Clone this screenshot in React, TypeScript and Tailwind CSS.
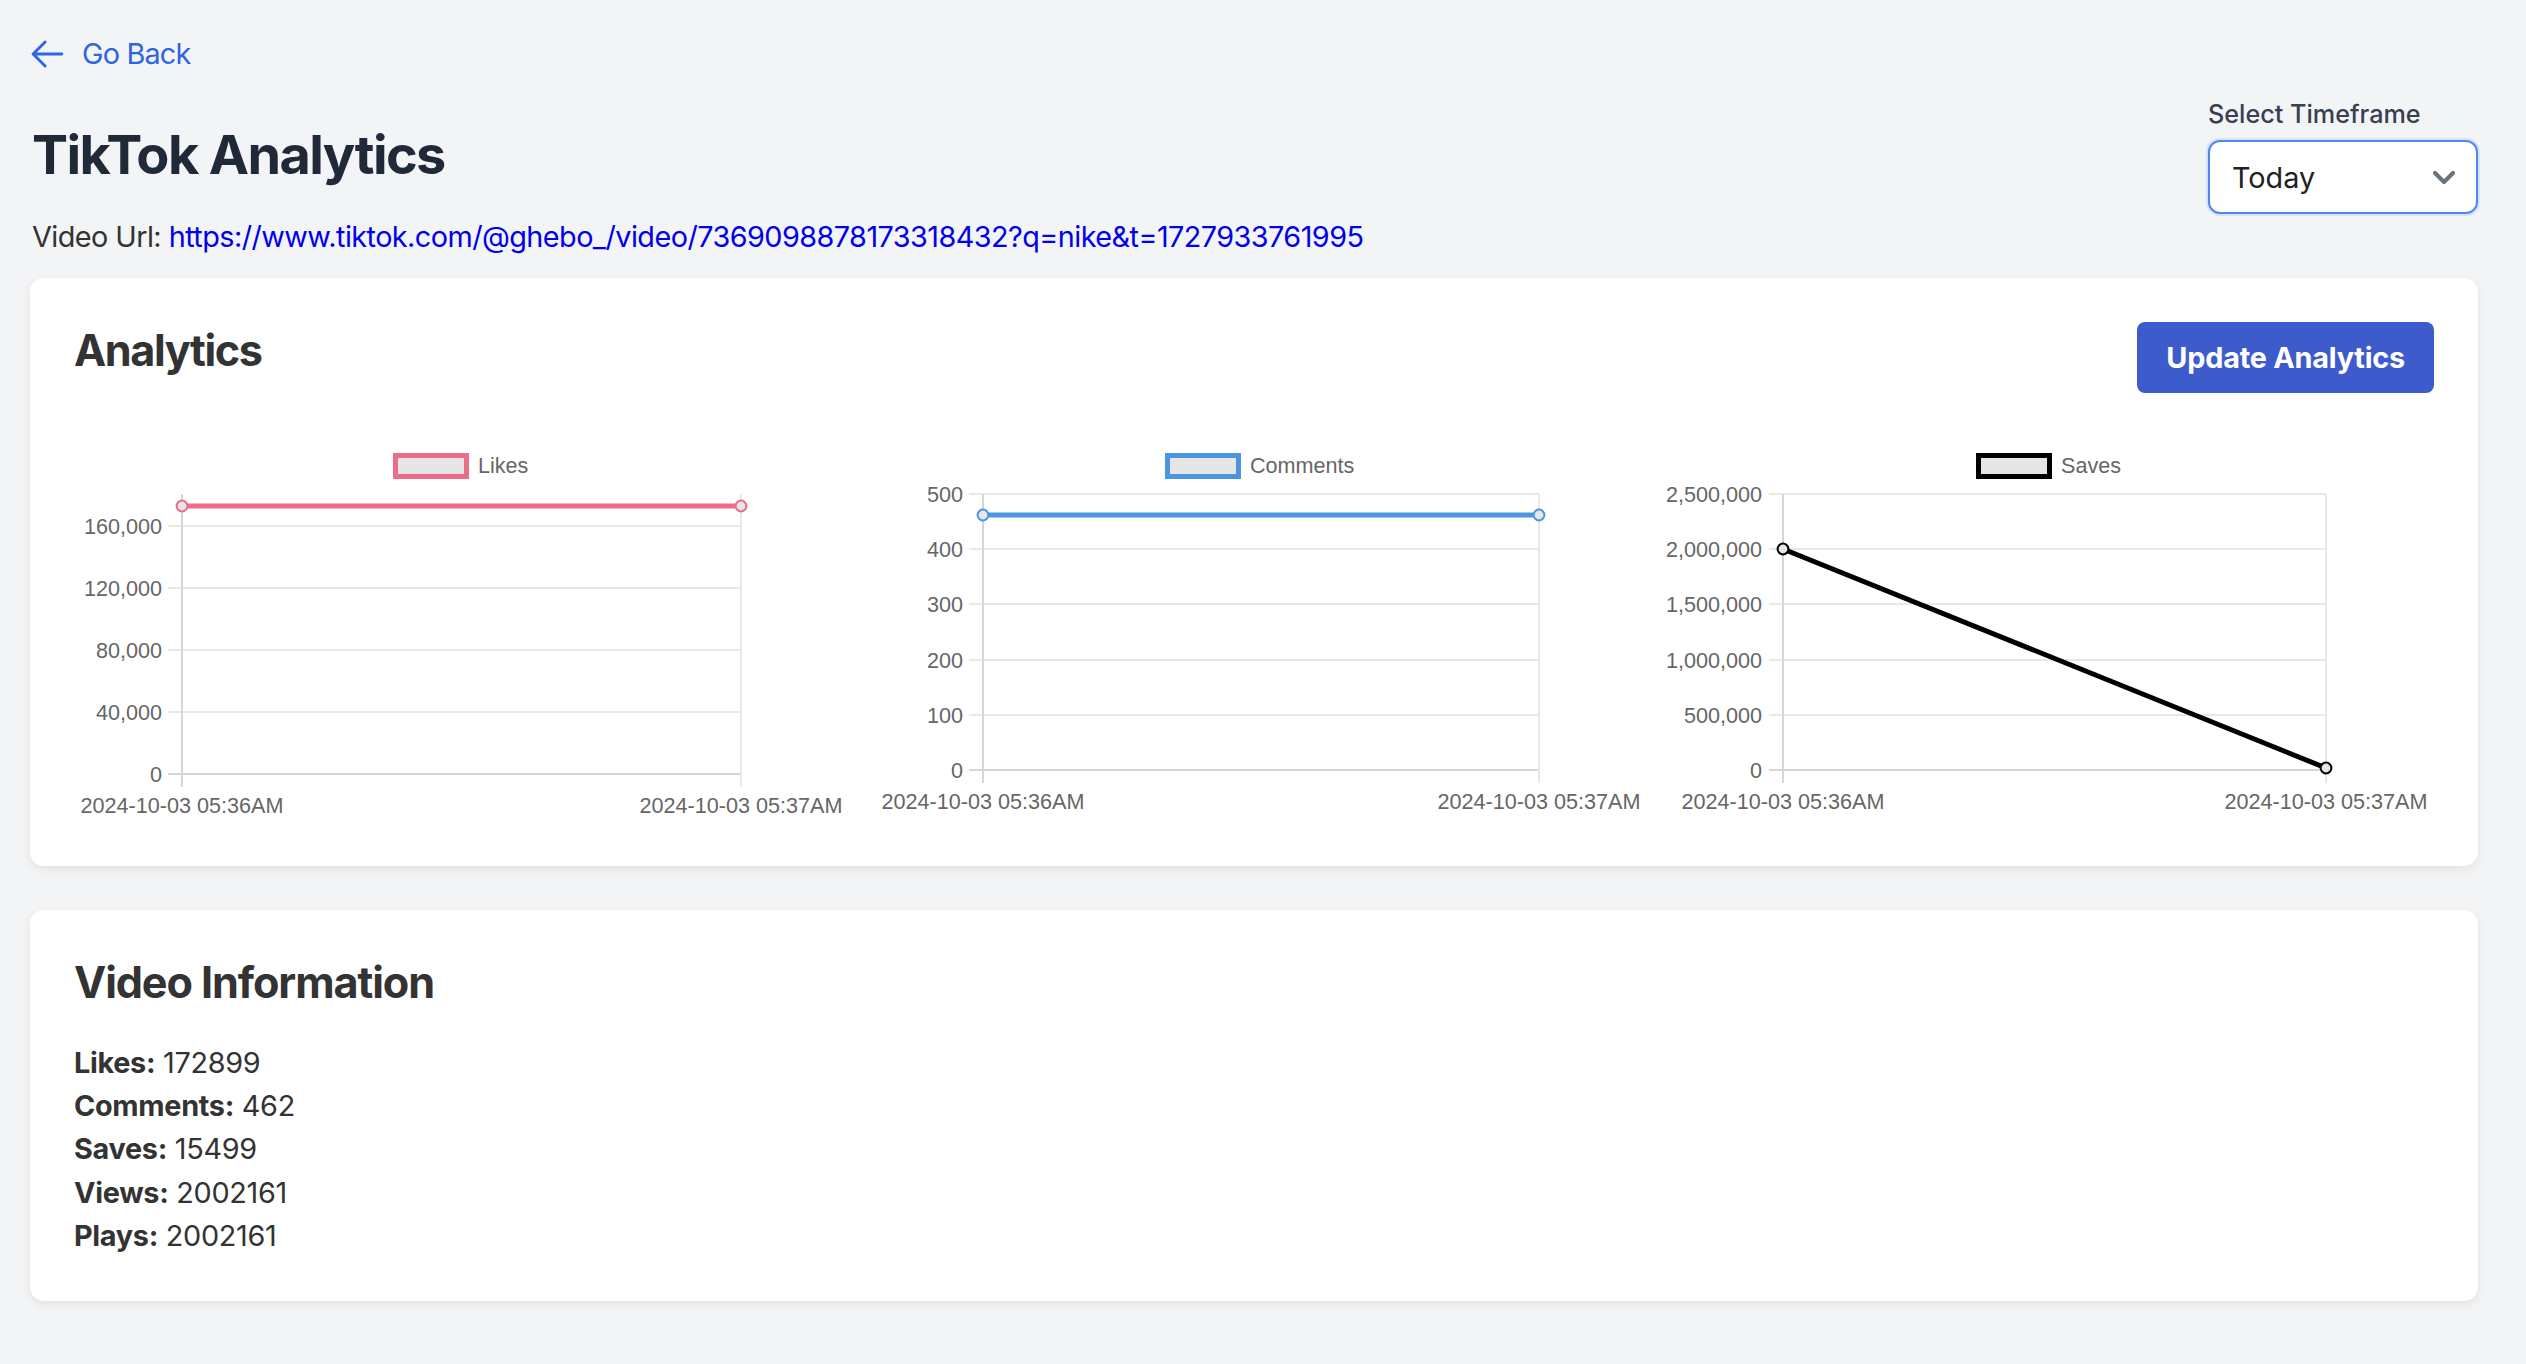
import React from 'react';

type ChartSpec = {
    name: string;
    color: string;
    axisX: number;
    rightX: number;
    topY: number;
    gridYs: number[];
    tickLabels: string[];
    points: [number, number];
    legendX: number;
    labelRight: number;
    xLabelY: number;
};

const X_LABELS = ['2024-10-03 05:36AM', '2024-10-03 05:37AM'];

const charts: ChartSpec[] = [
    {
        name: 'Likes',
        color: '#ec6d87',
        axisX: 108,
        rightX: 667,
        topY: 64,
        gridYs: [96, 158, 220, 282, 344],
        tickLabels: ['160,000', '120,000', '80,000', '40,000', '0'],
        points: [76, 76],
        legendX: 319,
        labelRight: 88,
        xLabelY: 383,
    },
    {
        name: 'Comments',
        color: '#4d95e2',
        axisX: 108,
        rightX: 664,
        topY: 64,
        gridYs: [64, 119, 174, 230, 285, 340],
        tickLabels: ['500', '400', '300', '200', '100', '0'],
        points: [85, 85],
        legendX: 290,
        labelRight: 88,
        xLabelY: 379,
    },
    {
        name: 'Saves',
        color: '#000000',
        axisX: 107,
        rightX: 650,
        topY: 64,
        gridYs: [64, 119, 174, 230, 285, 340],
        tickLabels: ['2,500,000', '2,000,000', '1,500,000', '1,000,000', '500,000', '0'],
        points: [119, 338],
        legendX: 300,
        labelRight: 86,
        xLabelY: 379,
    },
];

const LineChart: React.FC<{ spec: ChartSpec }> = ({ spec }) => {
    const zeroY = spec.gridYs[spec.gridYs.length - 1];
    const tickBottom = zeroY + 13;
    const font = { fontFamily: '"Liberation Sans", Arial, sans-serif', fontSize: 21.6 };

    return (
        <svg width="100%" height="392" viewBox="0 0 758 392" className="overflow-visible block">
            {/* legend */}
            <rect
                x={spec.legendX + 2.5}
                y={25.5}
                width={71}
                height={21}
                fill="#e6e6e6"
                stroke={spec.color}
                strokeWidth={5}
            />
            <text x={spec.legendX + 85} y={43} fill="#666" style={font}>
                {spec.name}
            </text>

            {/* horizontal grid */}
            {spec.gridYs.map((y, i) => (
                <line
                    key={i}
                    x1={spec.axisX - 14}
                    x2={spec.rightX}
                    y1={y}
                    y2={y}
                    stroke={i === spec.gridYs.length - 1 ? '#d6d6d6' : '#e8e8e8'}
                    strokeWidth={2}
                />
            ))}

            {/* vertical grid */}
            <line x1={spec.rightX} x2={spec.rightX} y1={spec.topY} y2={tickBottom} stroke="#e8e8e8" strokeWidth={2} />
            <line x1={spec.axisX} x2={spec.axisX} y1={spec.topY} y2={tickBottom} stroke="#d6d6d6" strokeWidth={2} />

            {/* y labels */}
            {spec.tickLabels.map((t, i) => (
                <text key={t} x={spec.labelRight} y={spec.gridYs[i] + 7.5} textAnchor="end" fill="#666" style={font}>
                    {t}
                </text>
            ))}

            {/* x labels */}
            <text x={spec.axisX} y={spec.xLabelY} textAnchor="middle" fill="#666" style={font}>
                {X_LABELS[0]}
            </text>
            <text x={spec.rightX} y={spec.xLabelY} textAnchor="middle" fill="#666" style={font}>
                {X_LABELS[1]}
            </text>

            {/* data */}
            <line
                x1={spec.axisX}
                y1={spec.points[0]}
                x2={spec.rightX}
                y2={spec.points[1]}
                stroke={spec.color}
                strokeWidth={5}
            />
            <circle cx={spec.axisX} cy={spec.points[0]} r={5.4} fill="#e6e6e6" stroke={spec.color} strokeWidth={2} />
            <circle cx={spec.rightX} cy={spec.points[1]} r={5.4} fill="#e6e6e6" stroke={spec.color} strokeWidth={2} />
        </svg>
    );
};

const stats = [
    ['Likes', '172899'],
    ['Comments', '462'],
    ['Saves', '15499'],
    ['Views', '2002161'],
    ['Plays', '2002161'],
];

export default function App() {
    return (
        <div className="min-h-screen bg-[#f3f4f6] pl-[30px] pr-[48px] pt-[32px] pb-[60px] font-['Inter',sans-serif]">
            {/* back link */}
            <a href="#" className="flex items-center gap-[20px] w-fit text-[28.8px] leading-[43.2px] tracking-[-0.8px] text-[#2f64e3]">
                <svg width="29" height="24" viewBox="3 4.5 18 15" className="overflow-visible ml-[3px]">
                    <path
                        d="M10.5 19.5 3 12m0 0 7.5-7.5M3 12h18"
                        fill="none"
                        stroke="currentColor"
                        strokeWidth={1.8}
                        strokeLinecap="round"
                        strokeLinejoin="round"
                    />
                </svg>
                <span>Go Back</span>
            </a>

            {/* title row */}
            <div className="flex justify-between items-center mt-[21px]">
                <h1 className="text-[54px] leading-[64.8px] font-bold text-[#1f2937] tracking-[-1.6px] pl-[2px]">
                    TikTok Analytics
                </h1>
                <div className="w-[270px]">
                    <div className="text-[25.2px] leading-[36px] font-medium text-[#374151] mb-[8px]">
                        Select Timeframe
                    </div>
                    <div className="h-[74px] rounded-[12px] bg-white border-[2px] border-[#4f86f0] shadow-[0_0_0_2px_#d5e3fc] flex items-center justify-between pl-[22px] pr-[20px]">
                        <span className="text-[28.8px] text-[#222]">Today</span>
                        <svg width="24" height="15" viewBox="0 0 24 15">
                            <path
                                d="M3 3 L12 12 L21 3"
                                fill="none"
                                stroke="#6b7280"
                                strokeWidth={4.2}
                                strokeLinecap="round"
                                strokeLinejoin="round"
                            />
                        </svg>
                    </div>
                </div>
            </div>

            <p className="text-[28.8px] leading-[43.2px] tracking-[-0.55px] text-[#333] mt-[1px] pl-[2px]">
                Video Url:{' '}
                <a href="#" className="text-[#0000ee]">
                    https://www.tiktok.com/@ghebo_/video/7369098878173318432?q=nike&amp;t=1727933761995
                </a>
            </p>

            {/* analytics card */}
            <section className="mt-[20px] bg-white rounded-[14px] shadow-[0_3px_10px_rgba(0,0,0,0.08)] p-[44px]">
                <div className="flex justify-between items-start">
                    <h2 className="text-[43.2px] leading-[57.6px] font-bold tracking-[-1.4px] text-[#333]">Analytics</h2>
                    <button className="h-[71px] px-[29px] rounded-[8px] bg-[#3e5bcb] text-white font-bold text-[28.8px] tracking-[-0.2px]">
                        Update Analytics
                    </button>
                </div>
                <div className="grid grid-cols-3 gap-x-[43px] mt-[37px]">
                    {charts.map((c) => (
                        <LineChart key={c.name} spec={c} />
                    ))}
                </div>
            </section>

            {/* info card */}
            <section className="mt-[44px] bg-white rounded-[14px] shadow-[0_3px_10px_rgba(0,0,0,0.08)] p-[44px]">
                <h2 className="text-[43.2px] leading-[57.6px] font-bold tracking-[-1.1px] text-[#333] mb-[29px]">
                    Video Information
                </h2>
                <div className="text-[28.8px] leading-[43.2px] tracking-[-0.3px] text-[#333]">
                    {stats.map(([k, v]) => (
                        <p key={k}>
                            <span className="font-bold">{k}:</span> {v}
                        </p>
                    ))}
                </div>
            </section>
        </div>
    );
}
